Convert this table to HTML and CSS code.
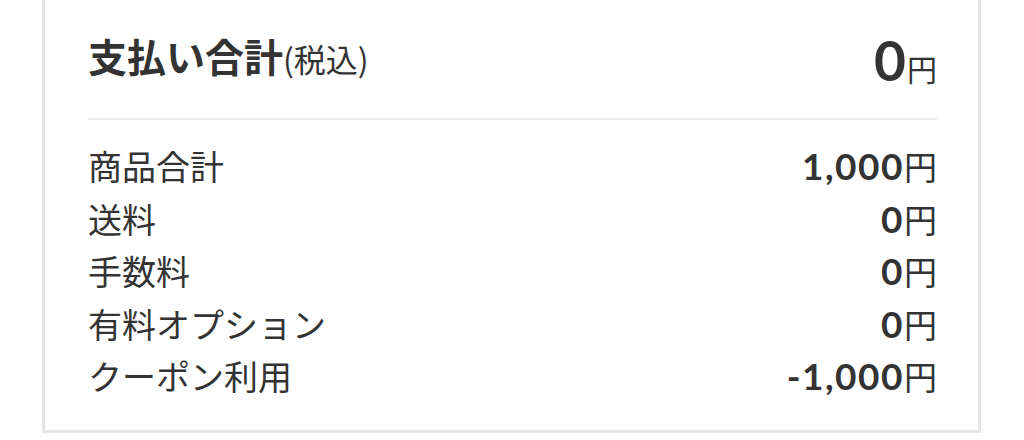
FILE: index.html
```html
<!DOCTYPE html>
<html lang="ja">

<head>
    <meta charset="UTF-8">
    <meta name="viewport" content="width=device-width, initial-scale=1.0">
    <title>お支払い金額</title>
    <link rel="stylesheet" href="styles.css">
</head>

<body>
    <div class="card">
        <div class="total">
            <div class="total-label">支払い合計<span class="tax">(税込)</span></div>
            <div class="total-price"><span class="num">0</span><span class="yen">円</span></div>
        </div>
        <ul class="details">
            <li class="row">
                <span class="label">商品合計</span>
                <span class="price"><span class="num">1,000</span><span class="yen">円</span></span>
            </li>
            <li class="row">
                <span class="label">送料</span>
                <span class="price"><span class="num">0</span><span class="yen">円</span></span>
            </li>
            <li class="row">
                <span class="label">手数料</span>
                <span class="price"><span class="num">0</span><span class="yen">円</span></span>
            </li>
            <li class="row">
                <span class="label">有料オプション</span>
                <span class="price"><span class="num">0</span><span class="yen">円</span></span>
            </li>
            <li class="row">
                <span class="label">クーポン利用</span>
                <span class="price"><span class="num">-1,000</span><span class="yen">円</span></span>
            </li>
        </ul>
    </div>
</body>

</html>
```

FILE: styles.css
```css
body {
    margin: 0;
    background: #fff;
    color: #333;
    font-family: "Noto Sans CJK JP", "Noto Sans", sans-serif;
}

.card {
    margin: 0 43px 0 42px;
    padding: 0 41px 0 43px;
    border: 3px solid #e6e6e6;
    border-top: none;
}

.total {
    display: flex;
    justify-content: space-between;
    align-items: center;
    height: 118px;
    border-bottom: 2px solid #ececec;
}

.total-label {
    padding-bottom: 8px;
    font-size: 39px;
    font-weight: 700;
    line-height: 1;
}

.tax {
    font-size: 32px;
    font-weight: 400;
}

.total-price {
    padding-top: 2px;
    line-height: 1;
}

.total-price .num {
    font-family: Lato, sans-serif;
    font-size: 55px;
    font-weight: 700;
    letter-spacing: 1px;
}

.total-price .yen {
    font-size: 30px;
    font-weight: 400;
}

.details {
    list-style: none;
    margin: 0;
    padding: 20px 0 27px;
}

.row {
    display: flex;
    justify-content: space-between;
    align-items: baseline;
    height: 52.5px;
    line-height: 52.5px;
    font-size: 34px;
}

.price .num {
    font-family: Lato, sans-serif;
    font-size: 37px;
    font-weight: 700;
    letter-spacing: 1.5px;
}

.price .yen {
    font-size: 33px;
}
```
